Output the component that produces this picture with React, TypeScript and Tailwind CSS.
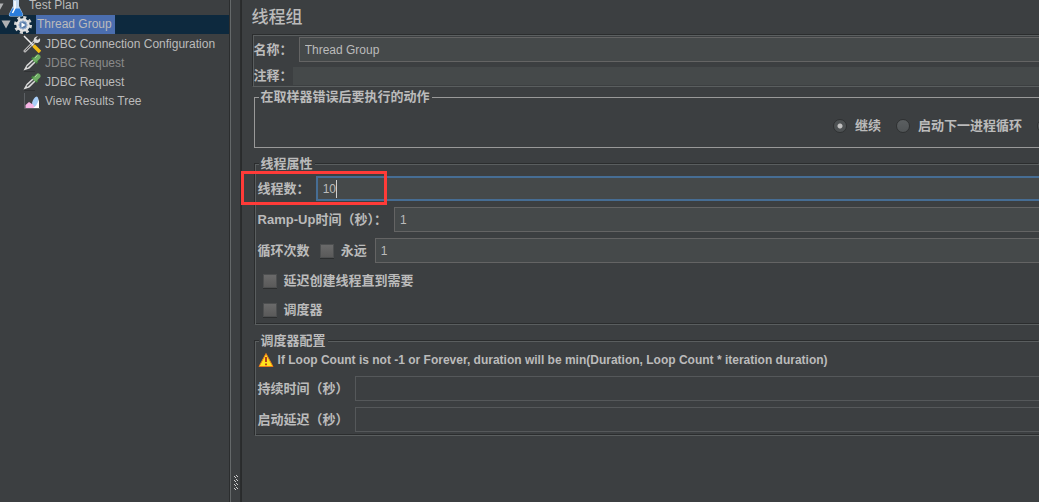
import type { ReactNode } from "react";
import clsx from "clsx";

function FlaskIcon() {
  return (
    <svg viewBox="0 0 18 18" className="h-[18px] w-[18px] shrink-0" aria-hidden="true">
      <path d="M6 1h6v6l4 8q.6 2.500-1.500 2.500h-11Q1.400 17.500 2 15l4-8z" fill="#c4d9ee" />
      <path d="M5.300 9.500h7.400l3 5.500q.5 2-1.200 2h-11q-1.700 0-1.200-2z" fill="#2b7ddb" />
      <path d="M8 2v7l-2.500 5" stroke="#fff" strokeWidth="1.500" fill="none" />
    </svg>
  );
}

function GearIcon() {
  return (
    <svg viewBox="0 0 18 18" className="h-[18px] w-[18px] shrink-0" aria-hidden="true">
      <circle cx="9" cy="9" r="7.500" fill="none" stroke="#d5d5d5" strokeWidth="3" strokeDasharray="3 2.890" />
      <circle cx="9" cy="9" r="5.500" fill="#5d80ad" stroke="#e4e4e4" strokeWidth="2.500" />
      <circle cx="9" cy="9" r="4" fill="none" stroke="#9eb4d0" />
      <path d="M7.500 6.500v5L11.500 9z" fill="#fff" />
    </svg>
  );
}

function ToolsIcon() {
  return (
    <svg viewBox="0 0 18 18" className="h-[18px] w-[18px] shrink-0" aria-hidden="true">
      <path d="M2 16 13 5" stroke="#b5b5b5" strokeWidth="3" strokeLinecap="round" />
      <path d="M2.500 15.500 12 6" stroke="#4c4c4c" />
      <path d="M15 1 12.500 4l1.500 1.500 3-2.200q.7 3.500-1.800 4.500-3 .8-4.500-1.500-.5-4.500 4.300-5.300z" fill="#ddd" />
      <path d="m1 1 9.500 9.500" stroke="#f0f0f0" strokeWidth="1.500" />
      <path d="m10.500 10.500 6.500 6.500" stroke="#f5bd14" strokeWidth="3.500" />
    </svg>
  );
}

function DropperIcon() {
  return (
    <svg viewBox="0 0 18 18" className="h-[18px] w-[18px] shrink-0" aria-hidden="true">
      <path d="M.5 16.500 3.500 11l6.500-6 3 3-6.500 6.500z" fill="#dcdcdc" />
      <path d="m4 13.500 7-6.500" stroke="#4a4d4f" strokeWidth="1.500" />
      <path d="m9 3.500 5.500 5.500" stroke="#3f7f3b" strokeWidth="2.500" />
      <path d="m12.500 5.500 2.500-2.500" stroke="#6fae64" strokeWidth="5" strokeLinecap="round" />
      <path d="m12 4 2.500-2.500" stroke="#a5d59b" />
      <path d="M1 17.500h11" stroke="#303234" />
    </svg>
  );
}

function ChartIcon() {
  return (
    <svg viewBox="0 0 18 18" className="h-[18px] w-[18px] shrink-0" aria-hidden="true">
      <path d="M1.500 1v15.500H17" fill="none" stroke="#5c6064" />
      <path d="M2.500 16v-3l3.500-3 3 2 2-2 4 6z" fill="#f6b4e4" />
      <path d="M9 11q1.500-5.500 4.500-6.500 2.500 0 2 7.500l-4 3z" fill="#a9cff8" />
      <path d="M10 16q4-2 6-9v9z" fill="#fff" />
    </svg>
  );
}

function WarningIcon() {
  return (
    <svg viewBox="0 0 16 16" className="h-4 w-4 shrink-0" aria-hidden="true">
      <path d="M8 1.500 15 14.500H1z" fill="#ffe21c" stroke="#ea7a1a" strokeLinejoin="round" />
      <path d="M8 5v5" stroke="#b5401a" strokeWidth="2" />
      <path d="M8 11.500v1.700" stroke="#b5401a" strokeWidth="2" />
    </svg>
  );
}

function Arrow() {
  return (
    <svg viewBox="0 0 10 9" className="mr-[3px] h-[9px] w-[10px] shrink-0" aria-hidden="true">
      <path d="M.5.500h9L5 8.500z" fill="#afb1b3" />
    </svg>
  );
}

function TreeRow({
  icon,
  label,
  className = "h-[19px] pl-[23px]",
  labelClassName = "px-1 leading-[18px]",
  open,
}: {
  icon: ReactNode;
  label: string;
  className?: string;
  labelClassName?: string;
  open?: boolean;
}) {
  return (
    <li className={clsx("flex items-center whitespace-nowrap", className)}>
      {open && <Arrow />}
      {icon}
      <span className={labelClassName}>{label}</span>
    </li>
  );
}

function TextField({
  id,
  value,
  variant = "normal",
}: {
  id: string;
  value?: string;
  variant?: "normal" | "focused" | "disabled" | "flat";
}) {
  return (
    <input
      id={id}
      type="text"
      defaultValue={value}
      disabled={variant === "disabled"}
      className={clsx(
        "min-w-0 flex-1 px-[5px] text-[12px] font-normal outline-none",
        variant === "flat" ? "h-[18px] bg-[#45494a]" : "h-[25px]",
        variant === "normal" && "border border-r-0 border-[#646464] bg-[#45494a]",
        variant === "focused" && "border-2 border-r-0 border-[#466d94] bg-[#45494a]",
        variant === "disabled" && "border border-r-0 border-[#55585a]"
      )}
    />
  );
}

function CheckBox({ id }: { id: string }) {
  return (
    <input
      id={id}
      type="checkbox"
      className="h-3.5 w-3.5 shrink-0 appearance-none border border-[#4d4f50] bg-linear-to-b from-[#6a6a6a] to-[#5a5a5a] shadow-[0_1px_0_#2c2e2f]"
    />
  );
}

function Radio({ label, checked, hideLabel }: { label: string; checked?: boolean; hideLabel?: boolean }) {
  return (
    <label className="flex shrink-0 items-center gap-2">
      <input
        type="radio"
        name="on-error"
        defaultChecked={checked}
        aria-label={hideLabel ? label : undefined}
        className="h-3.5 w-3.5 shrink-0 appearance-none rounded-full border border-[#2f3132] bg-linear-to-b from-[#5b5f61] to-[#505456] checked:bg-[radial-gradient(circle,#c0c0c0_2px,#4d5153_3px)]"
      />
      {!hideLabel && label}
    </label>
  );
}

function Group({ title, children }: { title: string; children: ReactNode }) {
  return (
    <fieldset className="ml-[13px] min-w-0 border border-r-0 border-[#5a5e5f] pb-[3px] pl-0.5 shadow-[-1px_-1px_0_#2b2d2e,inset_0_-1px_0_#2b2d2e]">
      <legend className="ml-px bg-[#3c3f41] px-0.5">{title}</legend>
      {children}
    </fieldset>
  );
}

export default function App() {
  return (
    <div className="flex h-screen overflow-hidden bg-[#3c3f41] font-['Liberation_Sans','Noto_Sans_CJK_SC',sans-serif] text-[13px] text-[#bbbbbb]">
      <nav className="w-[22.100%] shrink-0 overflow-hidden text-[12px]">
        <ul>
          <TreeRow
            className="-ml-1.5 h-[15px]"
            icon={<FlaskIcon />}
            label="Test Plan"
            labelClassName="self-start px-1 leading-[10px]"
            open
          />
          <TreeRow
            className="h-[19px] bg-[#0d293e] pl-px"
            icon={<GearIcon />}
            label="Thread Group"
            labelClassName="ml-1 bg-[#4b6eaf] pr-[3px] pl-px leading-[19px]"
            open
          />
          <TreeRow icon={<ToolsIcon />} label="JDBC Connection Configuration" />
          <TreeRow
            icon={<DropperIcon />}
            label="JDBC Request"
            labelClassName="px-1 leading-[18px] text-[#8a8a8a]"
          />
          <TreeRow icon={<DropperIcon />} label="JDBC Request" />
          <TreeRow icon={<ChartIcon />} label="View Results Tree" />
        </ul>
      </nav>

      <div className="flex w-3 shrink-0 items-end justify-center border-x border-l-[#646869] border-r-[#292b2c] pb-3 shadow-[-1px_0_0_#2b2d2e,inset_-1px_0_0_#2b2d2e]">
        <svg viewBox="0 0 4 15" className="h-[15px] w-1" fill="#d0d0d0" aria-hidden="true">
          {[0, 4, 8, 12].map((y) => (
            <g key={y}>
              <rect x="0" y={y + 1} width="1" height="1" />
              <rect x="1" y={y + 2} width="1" height="1" />
              <rect x="2" y={y} width="1" height="1" />
              <rect x="3" y={y + 1} width="1" height="1" />
            </g>
          ))}
        </svg>
      </div>

      <main className="min-w-0 flex-1 leading-4 font-bold whitespace-nowrap">
        <h1 className="mt-1.5 mb-1 ml-2.5 text-[17px] leading-6 font-medium">线程组</h1>

        <div className="ml-2.5 flex flex-col gap-[5px] border border-r-0 border-t-[#2b2d2e] border-b-[#5a5e5f] border-l-[#2b2d2e] pt-0.5 pb-px pl-px shadow-[inset_1px_1px_0_#5a5e5f]">
          <div className="flex items-center">
            <label htmlFor="name" className="mr-1.5">名称：</label>
            <TextField id="name" value="Thread Group" />
          </div>
          <div className="flex items-center">
            <label htmlFor="comment">注释：</label>
            <TextField id="comment" variant="flat" />
          </div>
        </div>

        <fieldset className="mt-0.5 mb-2 ml-3 min-w-0 border border-r-0 border-[#999999]">
          <legend className="ml-1 px-0.5">在取样器错误后要执行的动作</legend>
          <div className="flex h-[42px] items-center justify-end gap-[15px] overflow-hidden">
            <Radio label="继续" checked />
            <Radio label="启动下一进程循环" />
            <div className="-mr-3">
              <Radio label="停止线程" hideLabel />
            </div>
          </div>
        </fieldset>

        <Group title="线程属性">
          <div className="flex flex-col gap-1.5 pt-1">
            <div className="relative flex items-center">
              <label htmlFor="threads" className="mr-1.5">线程数：</label>
              <TextField id="threads" value="10" variant="focused" />
              <span className="absolute top-1 left-[78px] h-[18px] w-px bg-[#d0d0d0]" />
              <span className="pointer-events-none absolute -top-[5px] -left-[17px] h-[34px] w-[146px] border-3 border-[#ff3b38]" />
            </div>
            <div className="flex items-center">
              <label htmlFor="ramp-up" className="mr-[7px]">Ramp-Up时间（秒）：</label>
              <TextField id="ramp-up" value="1" />
            </div>
            <div className="flex items-center">
              <label htmlFor="loops" className="mr-2.5">循环次数</label>
              <CheckBox id="forever" />
              <label htmlFor="forever" className="mr-2 ml-[7px]">永远</label>
              <TextField id="loops" value="1" />
            </div>
            <div className="flex h-[23px] items-center gap-[7px] pl-[5px]">
              <CheckBox id="delayed-start" />
              <label htmlFor="delayed-start">延迟创建线程直到需要</label>
            </div>
            <div className="flex h-[23px] items-center gap-[7px] pl-[5px]">
              <CheckBox id="scheduler" />
              <label htmlFor="scheduler">调度器</label>
            </div>
          </div>
        </Group>

        <div className="h-2" />

        <Group title="调度器配置">
          <div className="flex flex-col gap-1.5 pt-px">
            <p className="flex h-5 items-center gap-1 text-[12px]">
              <WarningIcon />
              If Loop Count is not -1 or Forever, duration will be min(Duration, Loop Count * iteration duration)
            </p>
            <div className="flex items-center">
              <label htmlFor="duration" className="mr-1.5">持续时间（秒）</label>
              <TextField id="duration" variant="disabled" />
            </div>
            <div className="flex items-center">
              <label htmlFor="delay" className="mr-1.5">启动延迟（秒）</label>
              <TextField id="delay" variant="disabled" />
            </div>
          </div>
        </Group>
      </main>
    </div>
  );
}
